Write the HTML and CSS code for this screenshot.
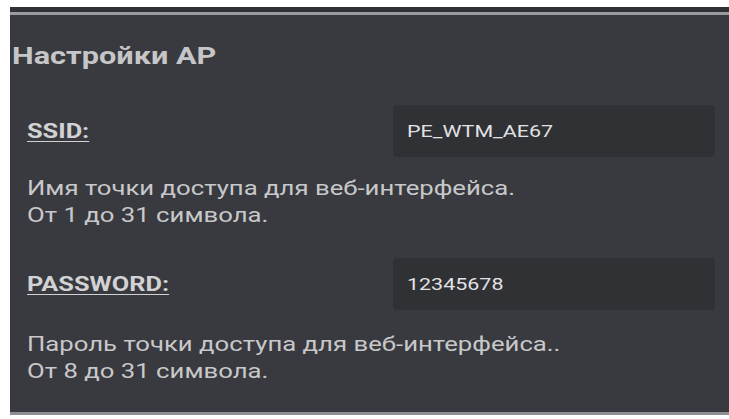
FILE: index.html
```html
<!DOCTYPE html>
<html lang="ru">
<head>
<meta charset="utf-8">
<title>Настройки AP</title>
<link rel="stylesheet" href="styles.css">
</head>
<body>
  <section class="panel">
    <div class="panel-edge"></div>
    <h2 class="panel-title"><span class="wide">Настройки AP</span></h2>

    <div class="field">
      <label class="field-label" for="ssid"><span class="wide">SSID:</span></label>
      <div class="field-input" id="ssid"><span class="wide">PE_WTM_AE67</span></div>
    </div>
    <p class="field-hint"><span class="wide">Имя точки доступа для веб-интерфейса.<br>От 1 до 31 символа.</span></p>

    <div class="field field-second">
      <label class="field-label" for="pass"><span class="wide">PASSWORD:</span></label>
      <div class="field-input" id="pass"><span class="wide">12345678</span></div>
    </div>
    <p class="field-hint field-hint-last"><span class="wide">Пароль точки доступа для веб-интерфейса..<br>От 8 до 31 символа.</span></p>
  </section>
</body>
</html>
```

FILE: styles.css
```css
html, body {
  margin: 0;
  padding: 0;
  background: #ffffff;
}

body {
  font-family: Roboto, "Liberation Sans", sans-serif;
  padding: 7px 0 1px 10px;
}

/* the device renders its UI font slightly stretched sideways */
.wide {
  display: inline-block;
  white-space: nowrap;
  transform: scaleX(1.3);
  transform-origin: 0 50%;
}

.panel {
  background: #383a3f;
  border-bottom: 3px solid #8e8f92;
  color: #c9c9cb;
  height: 408px;
  box-sizing: border-box;
  overflow: hidden;
}

.panel-edge {
  height: 5px;
  background: #2f3135;
  border-bottom: 3px solid #9a9b9e;
}

.panel-title {
  margin: 26px 0 0 2px;
  font-size: 23.6px;
  line-height: 30px;
  font-weight: 700;
  color: #c6c6c8;
}

.field {
  display: flex;
  align-items: center;
  margin-top: 34px;
  padding-left: 17px;
  padding-right: 14px;
}

.field-second {
  margin-top: 29px;
}

.field-label {
  flex: 1;
  font-size: 19.5px;
  font-weight: 700;
  color: #d2d2d4;
}

.field-label .wide {
  text-decoration: underline;
  text-underline-offset: 3px;
}

.field-input {
  width: 322px;
  height: 52px;
  box-sizing: border-box;
  border-radius: 4px;
  background: #2f3135;
  color: #e2e2e4;
  font-size: 16.5px;
  padding: 0 14px;
  display: flex;
  align-items: center;
}

.field-hint {
  margin: 18px 0 0 0;
  padding-left: 17px;
  font-size: 19.8px;
  line-height: 27px;
  color: #c8c8ca;
}

.field-hint-last {
  margin-top: 21px;
}
```
